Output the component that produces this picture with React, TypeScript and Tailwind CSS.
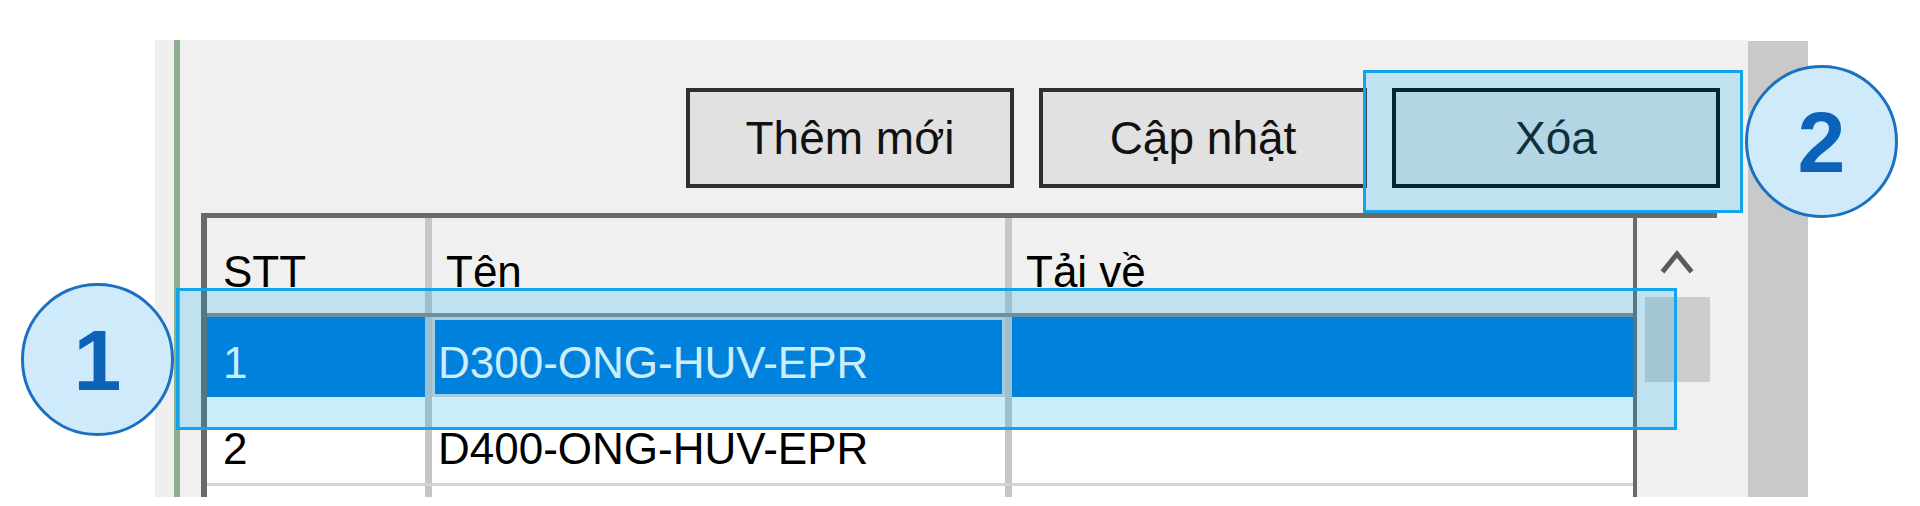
import type { ReactNode } from "react";

function Btn({ children, dark }: { children: ReactNode; dark?: boolean }) {
  return (
    <div
      className={
        "flex h-[100px] w-[328px] items-center justify-center border-[4px] bg-[#e1e1e1] text-[46px] leading-none text-[#111] " +
        (dark ? "border-[#050505]" : "border-[#2f2f2f]")
      }
    >
      {children}
    </div>
  );
}

function Badge({ n, className }: { n: string; className: string }) {
  return (
    <div
      className={
        "absolute flex h-[153px] w-[153px] items-center justify-center rounded-full border-[3px] border-[#1c70c2] bg-[#cfebfb] text-[86px] font-bold leading-none text-[#0c63b8] " +
        className
      }
    >
      {n}
    </div>
  );
}

export default function App() {
  return (
    <div className="relative h-[506px] w-[1920px] overflow-hidden bg-white font-['Liberation_Sans',Arial,sans-serif]">
      <div className="flex pl-[155px] pt-[40px]">
        <div className="flex h-[457px] w-[1593px] bg-[#f0f0f0]">
          <div className="w-[19px] bg-[#efefef]" />
          <div className="w-[6px] bg-[#8fae8f]" />
          <div className="flex flex-1 flex-col">
            <div className="flex justify-end gap-[25px] pr-[28px] pt-[48px]">
              <Btn>Thêm mới</Btn>
              <Btn>Cập nhật</Btn>
              <Btn dark>Xóa</Btn>
            </div>

            <div className="ml-[21px] mt-[25px] flex h-[284px] w-[1516px] flex-col border-l-[6px] border-t-[5px] border-[#6a6a6a] bg-white text-[44px] leading-none text-black">
              <div className="flex flex-1">
                <div className="flex w-[1426px] flex-col">
                  {/* header */}
                  <div className="flex h-[99px] border-b-[4px] border-[#8a8a8a] bg-[#f0f0f0]">
                    <div className="w-[225px] border-r-[7px] border-[#c6c6c6] pl-[16px] pt-[32px]">STT</div>
                    <div className="w-[580px] border-r-[7px] border-[#c6c6c6] pl-[14px] pt-[32px]">Tên</div>
                    <div className="flex-1 pl-[14px] pt-[32px]">Tải về</div>
                  </div>
                  {/* selected row */}
                  <div className="flex h-[80px] bg-[#0078d7] text-white">
                    <div className="w-[225px] border-r-[7px] border-[#c6c6c6] pl-[16px] pt-[24px]">1</div>
                    <div className="w-[580px] border-r-[7px] border-[#c6c6c6]">
                      <div className="h-full border-[3px] border-[#cfd4da] pl-[3px] pt-[21px]">D300-ONG-HUV-EPR</div>
                    </div>
                    <div className="flex-1" />
                  </div>
                  <div className="flex h-[89px] border-b-[3px] border-[#d4d4d4]">
                    <div className="w-[225px] border-r-[7px] border-[#c6c6c6] pl-[16px] pt-[30px]">2</div>
                    <div className="w-[580px] border-r-[7px] border-[#c6c6c6] pl-[6px] pt-[30px]">D400-ONG-HUV-EPR</div>
                    <div className="flex-1" />
                  </div>
                  <div className="flex flex-1">
                    <div className="w-[225px] border-r-[7px] border-[#c6c6c6]" />
                    <div className="w-[580px] border-r-[7px] border-[#c6c6c6]" />
                    <div className="flex-1" />
                  </div>
                </div>
                <div className="w-[4px] bg-[#6a6a6a]" />
                <div className="flex w-[80px] flex-col items-center bg-[#f0f0f0] pt-[28px]">
                  <svg width="34" height="28" viewBox="0 0 34 28" fill="none" aria-hidden>
                    <path d="M4 24 L17 8 L30 24" stroke="#5a5a5a" strokeWidth="5" strokeLinecap="square" />
                  </svg>
                  <div className="mt-[23px] h-[85px] w-[65px] bg-[#cdcdcd]" />
                </div>
              </div>
            </div>
          </div>
        </div>
        <div className="mt-[1px] h-[456px] w-[60px] bg-[#c9c9c9]" />
      </div>

      {/* annotation overlays */}
      <div className="absolute left-[1363px] top-[70px] h-[143px] w-[380px] border-[3px] border-[#13a3e8] bg-[#00aaf0]/20" />
      <div className="absolute left-[176px] top-[288px] h-[142px] w-[1501px] border-[3px] border-[#13a3e8] bg-[#00aaf0]/20" />
      <Badge n="1" className="left-[21px] top-[283px]" />
      <Badge n="2" className="left-[1745px] top-[65px]" />
    </div>
  );
}
